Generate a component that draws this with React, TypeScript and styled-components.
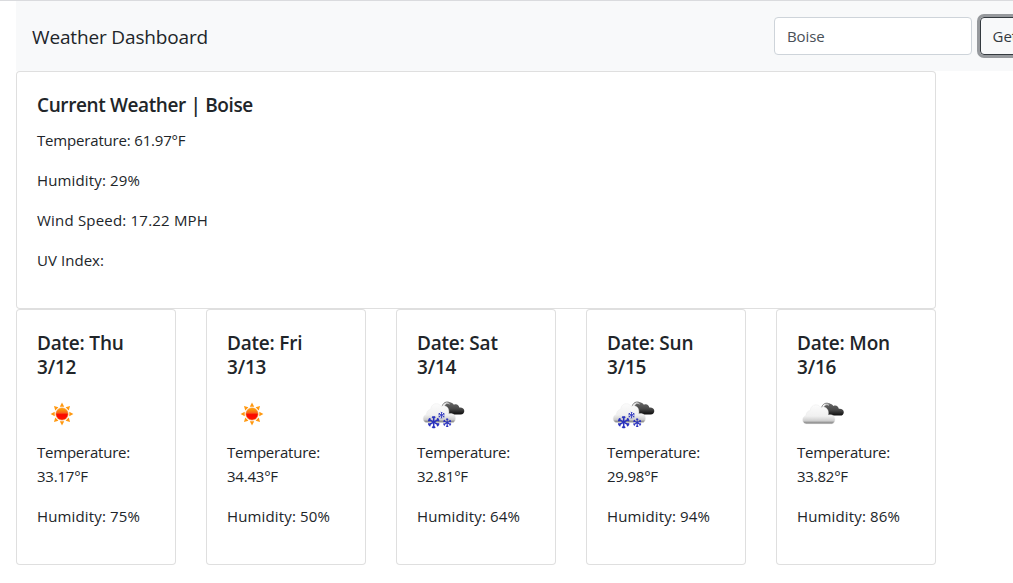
import React from "react";
import styled, { createGlobalStyle } from "styled-components";

const GlobalStyle = createGlobalStyle`
  *, *::before, *::after { box-sizing: border-box; }
  html { overflow: hidden; }
  body {
    margin: 0;
    background: #fff;
    color: #212529;
    font-family: "Segoe UI", "Open Sans", "Noto Sans", sans-serif;
    font-size: 15px;
    line-height: 24px;
  }
`;

const Page = styled.div`
  height: 583px;
  padding-left: 16px;
  overflow: hidden;
  border-top: 1px solid #dadbde;
`;

const Navbar = styled.nav`
  display: flex;
  align-items: center;
  justify-content: space-between;
  width: 1100px;
  height: 70px;
  padding: 0 16px;
  background: #f8f9fa;
`;

const Brand = styled.span`
  padding-top: 2px;
  font-size: 19px;
  line-height: 30px;
  letter-spacing: -0.15px;
`;

const SearchForm = styled.form`
  display: flex;
  gap: 8px;
  width: 326px;
`;

const SearchInput = styled.input`
  width: 198px;
  height: 38px;
  padding: 6px 12px;
  border: 1px solid #ced4da;
  border-radius: 4px;
  background: #fff;
  color: #495057;
  font: inherit;
  letter-spacing: -0.1px;
  outline: none;
`;

const SearchButton = styled.button`
  flex: 1;
  height: 38px;
  padding: 6px 11.5px;
  border: 1px solid #343a40;
  border-radius: 4px;
  background: transparent;
  box-shadow: 0 0 0 3px rgba(52, 58, 64, 0.5);
  color: #343a40;
  font: inherit;
  text-align: left;
  white-space: nowrap;
`;

const Card = styled.section`
  padding: 20px;
  border: 1px solid rgba(0, 0, 0, 0.125);
  border-radius: 4px;
  background: #fff;
`;

const CurrentCard = styled(Card)`
  width: 920px;
  height: 238px;
`;

const Forecast = styled.div`
  display: grid;
  grid-template-columns: repeat(5, 160px);
  gap: 30px;
`;

const DayCard = styled(Card)`
  height: 256px;
`;

const Title = styled.h5<{ $tracking?: number }>`
  margin: 0;
  padding: 1px 0 11px;
  font-size: 19px;
  font-weight: 600;
  line-height: 24px;
  letter-spacing: ${(p) => p.$tracking ?? -0.2}px;
`;

const Text = styled.p<{ $tracking?: number }>`
  margin: 0 0 16px;
  letter-spacing: ${(p) => p.$tracking ?? 0}px;
`;

const Icon = styled.svg`
  display: block;
  width: 50px;
  height: 50px;
`;

type Sky = "sun" | "snow" | "clouds";

const Sun = () => (
  <Icon viewBox="0 0 50 50">
    <defs>
      <linearGradient id="sunFill" x1="0" y1="0" x2="0" y2="1">
        <stop offset="0" stopColor="#ffb000" />
        <stop offset="0.4" stopColor="#f8641a" />
        <stop offset="0.55" stopColor="#fa0800" />
        <stop offset="1" stopColor="#ff1600" />
      </linearGradient>
    </defs>
    {[0, 45, 90, 135, 180, 225, 270, 315].map((a) => (
      <path key={a} d="M22.8 16.7 L25 12.6 L27.2 16.7 Z" fill="#ff980f" transform={`rotate(${a} 25 24)`} />
    ))}
    <circle cx="25" cy="24" r="6.1" fill="url(#sunFill)" stroke="#f5811f" strokeWidth="0.6" />
  </Icon>
);

const Flake = ({ x, y, r }: { x: number; y: number; r: number }) => (
  <g transform={`translate(${x} ${y}) scale(${r / 6})`} stroke="#2a32be" fill="none">
    {[0, 60, 120, 180, 240, 300].map((a) => (
      <path key={a} strokeWidth="1.5" d="M0 0 V-6 M-1.5 -5.6 L0 -4.1 L1.5 -5.6" transform={`rotate(${a})`} />
    ))}
  </g>
);

const Clouds = ({ snow, id }: { snow?: boolean; id: string }) => (
  <Icon viewBox="0 0 50 50">
    <defs>
      <linearGradient id={`${id}-dark`} x1="0" y1="0" x2="0" y2="1">
        <stop offset="0" stopColor="#686868" />
        <stop offset="0.55" stopColor="#484848" />
        <stop offset="1" stopColor="#0c0c0c" />
      </linearGradient>
      <linearGradient id={`${id}-light`} x1="0" y1="0" x2="0" y2="1">
        <stop offset="0" stopColor="#fcfcfc" />
        <stop offset="0.6" stopColor="#f0f0f0" />
        <stop offset="0.84" stopColor="#cecece" />
        <stop offset="1" stopColor="#707070" />
      </linearGradient>
    </defs>
    <g transform={snow ? "translate(0.5 -1.2)" : undefined}>
      <path
        d="M29 14.2 C31.5 12.6 35.2 13.4 36.4 16 C39 14.8 41.4 16.2 41.8 18.8 C44.6 18.4 46.8 20 46.8 22.2 C46.8 24.2 45.4 25.6 43.2 25.6 H33 C29 25 25.5 19 27 16.4 Z"
        fill={`url(#${id}-dark)`}
      />
      <path d="M24.6 18.2 C25 14 29.3 11.7 33 14.3" fill="none" stroke="#777" strokeWidth="1" />
      <path d="M26 18.5 C26.4 15.3 29.5 13.7 32 15.2" fill="none" stroke="#ddd" strokeWidth="1" />
      <path
        d="M9 33.8 C6.8 33.6 5.5 31.8 5.7 29.6 C5.8 27.6 7.2 26 9 25.6 C8.9 22.7 11 20.6 13.3 20.6 C13.3 17.2 15.7 14.8 19 14.8 C21.2 14.8 22.7 16 23.6 17.6 C27.4 15.6 31.4 18.2 31.4 22.6 C31.5 23.5 31.4 24.2 31 25 C35.4 23.8 38 26.2 38 29.6 C38 32 36.5 33.8 34.6 33.8 Z"
        fill={`url(#${id}-light)`}
        stroke="#e9e9e9"
        strokeWidth="0.4"
      />
    </g>
    {snow && (
      <>
        <Flake x={16.7} y={32.2} r={6} />
        <Flake x={24.5} y={25.2} r={3.2} />
        <Flake x={30.2} y={32.7} r={4.2} />
      </>
    )}
  </Icon>
);

const SkyIcon = ({ sky, id }: { sky: Sky; id: string }) =>
  sky === "sun" ? <Sun /> : <Clouds id={id} snow={sky === "snow"} />;

const days: { day: string; date: string; sky: Sky; temp: string; humidity: number }[] = [
  { day: "Thu", date: "3/12", sky: "sun", temp: "33.17", humidity: 75 },
  { day: "Fri", date: "3/13", sky: "sun", temp: "34.43", humidity: 50 },
  { day: "Sat", date: "3/14", sky: "snow", temp: "32.81", humidity: 64 },
  { day: "Sun", date: "3/15", sky: "snow", temp: "29.98", humidity: 94 },
  { day: "Mon", date: "3/16", sky: "clouds", temp: "33.82", humidity: 86 },
];

export default function App() {
  return (
    <>
      <GlobalStyle />
      <Page>
        <Navbar>
          <Brand>Weather Dashboard</Brand>
          <SearchForm>
            <SearchInput defaultValue="Boise" />
            <SearchButton type="button">Get Weather</SearchButton>
          </SearchForm>
        </Navbar>
        <CurrentCard>
          <Title $tracking={-0.38}>Current Weather | Boise</Title>
          <Text $tracking={-0.18}>Temperature: 61.97°F</Text>
          <Text $tracking={0.15}>Humidity: 29%</Text>
          <Text $tracking={0.2}>Wind Speed: 17.22 MPH</Text>
          <Text $tracking={0.05}>UV Index:</Text>
        </CurrentCard>
        <Forecast>
          {days.map((d) => (
            <DayCard key={d.day}>
              <Title>
                Date: {d.day}
                <br />
                {d.date}
              </Title>
              <SkyIcon sky={d.sky} id={d.day} />
              <Text $tracking={-0.22}>Temperature: {d.temp}°F</Text>
              <Text $tracking={0.15}>Humidity: {d.humidity}%</Text>
            </DayCard>
          ))}
        </Forecast>
      </Page>
    </>
  );
}
